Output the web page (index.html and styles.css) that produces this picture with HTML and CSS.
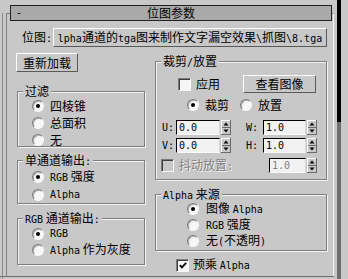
FILE: index.html
```html
<!DOCTYPE html>
<html>
<head>
<meta charset="utf-8">
<link rel="stylesheet" href="styles.css">
</head>
<body>
<div class="screen">
  <div class="main">
    <div class="outer">
      <div class="rollout">
        <div class="hdr"><span class="hdr-toggle e">-</span><span class="hdr-title">位图参数</span><span></span></div>
        <div class="content">
          <div class="row-path">
            <span class="path-label">位图<span class="e">:</span></span>
            <div class="btn path-btn"><span class="path-text"><span class="e">lpha</span>通道的<span class="e">tga</span>图来制作文字漏空效果<span class="e">\</span>抓图<span class="e">\8.tga</span></span></div>
          </div>
          <div class="cols">
            <div class="col">
              <div class="btn reload">重新加载</div>
              <div class="group gl g-filter">
                <div class="legend">过滤</div>
                <div class="opt"><span class="radio on"></span><span>四棱锥</span></div>
                <div class="opt"><span class="radio"></span><span>总面积</span></div>
                <div class="opt"><span class="radio"></span><span>无</span></div>
              </div>
              <div class="group gl g-single">
                <div class="legend">单通道输出<span class="e">:</span></div>
                <div class="opt"><span class="radio on"></span><span><span class="e">RGB</span> 强度</span></div>
                <div class="opt"><span class="radio"></span><span class="e">Alpha</span></div>
              </div>
              <div class="group gl g-rgb">
                <div class="legend"><span class="e">RGB</span> 通道输出<span class="e">:</span></div>
                <div class="opt"><span class="radio on"></span><span class="e">RGB</span></div>
                <div class="opt"><span class="radio"></span><span><span class="e">Alpha</span> 作为灰度</span></div>
              </div>
            </div>
            <div class="col">
              <div class="group g-crop">
                <div class="legend">裁剪<span class="e">/</span>放置</div>
                <div class="row-a">
                  <span class="chk ml22"></span><span class="ml5">应用</span>
                  <div class="btn view">查看图像</div>
                </div>
                <div class="row-b">
                  <span class="radio on ml31"></span><span class="ml6">裁剪</span>
                  <span class="radio ml11"></span><span class="ml6">放置</span>
                </div>
                <div class="spin-row mt7">
                  <span class="e lbl-u">U:</span>
                  <span class="field fw44"><span class="e">0.0</span></span>
                  <span class="arrows"><svg width="10" height="15" viewBox="0 0 10 15"><rect x="0" y="0" width="10" height="15" fill="#c8c8c8"/><path d="M0 0.5H9.5M0.5 0V15" stroke="#fff"/><path d="M0 14.5H10M9.5 0V15M1 7.5H9" stroke="#6a6a6a"/><path d="M5 2.5L7.5 5.5H2.5Z M2.5 9.5H7.5L5 12.5Z" fill="#000"/></svg></span>
                  <span class="e lbl-w">W:</span>
                  <span class="field fw43"><span class="e">1.0</span></span>
                  <span class="arrows"><svg width="10" height="15" viewBox="0 0 10 15"><rect x="0" y="0" width="10" height="15" fill="#c8c8c8"/><path d="M0 0.5H9.5M0.5 0V15" stroke="#fff"/><path d="M0 14.5H10M9.5 0V15M1 7.5H9" stroke="#6a6a6a"/><path d="M5 2.5L7.5 5.5H2.5Z M2.5 9.5H7.5L5 12.5Z" fill="#000"/></svg></span>
                </div>
                <div class="spin-row mt3">
                  <span class="e lbl-u">V:</span>
                  <span class="field fw44"><span class="e">0.0</span></span>
                  <span class="arrows"><svg width="10" height="15" viewBox="0 0 10 15"><rect x="0" y="0" width="10" height="15" fill="#c8c8c8"/><path d="M0 0.5H9.5M0.5 0V15" stroke="#fff"/><path d="M0 14.5H10M9.5 0V15M1 7.5H9" stroke="#6a6a6a"/><path d="M5 2.5L7.5 5.5H2.5Z M2.5 9.5H7.5L5 12.5Z" fill="#000"/></svg></span>
                  <span class="e lbl-w">H:</span>
                  <span class="field fw43"><span class="e">1.0</span></span>
                  <span class="arrows"><svg width="10" height="15" viewBox="0 0 10 15"><rect x="0" y="0" width="10" height="15" fill="#c8c8c8"/><path d="M0 0.5H9.5M0.5 0V15" stroke="#fff"/><path d="M0 14.5H10M9.5 0V15M1 7.5H9" stroke="#6a6a6a"/><path d="M5 2.5L7.5 5.5H2.5Z M2.5 9.5H7.5L5 12.5Z" fill="#000"/></svg></span>
                </div>
                <div class="spin-row mt5">
                  <span class="chk off ml5"></span><span class="ml5 dis">抖动放置<span class="e">:</span></span>
                  <span class="field fw37 dis-field"><span class="e">1.0</span></span>
                  <span class="arrows ml3"><svg width="10" height="15" viewBox="0 0 10 15"><rect x="0" y="0" width="10" height="15" fill="#c8c8c8"/><path d="M0 0.5H9.5M0.5 0V15" stroke="#fff"/><path d="M0 14.5H10M9.5 0V15M1 7.5H9" stroke="#6a6a6a"/><path d="M5 2.5L7.5 5.5H2.5Z M2.5 9.5H7.5L5 12.5Z" fill="#000"/></svg></span>
                </div>
              </div>
              <div class="group g-alpha">
                <div class="legend"><span class="e">Alpha</span> 来源</div>
                <div class="opt2"><span class="radio on"></span><span>图像 <span class="e">Alpha</span></span></div>
                <div class="opt2"><span class="radio"></span><span><span class="e">RGB</span> 强度</span></div>
                <div class="opt2"><span class="radio"></span><span>无<span class="e">(</span>不透明<span class="e">)</span></span></div>
              </div>
              <div class="premul">
                <span class="chk"><svg width="11" height="11" viewBox="0 0 11 11"><path d="M2 5L4.3 7.5L9 2.5" fill="none" stroke="#000" stroke-width="2"/></svg></span>
                <span class="ml4">预乘 <span class="e">Alpha</span></span>
              </div>
            </div>
          </div>
        </div>
      </div>
    </div>
  </div>
  <div class="gap"></div>
  <div class="sb"></div>
</div>
</body>
</html>
```
FILE: styles.css
```css
* { box-sizing: border-box; }
html, body { margin: 0; padding: 0; }
body {
  width: 348px;
  height: 279px;
  overflow: hidden;
  background: #c8c8c8;
  font-family: "Noto Sans CJK SC", sans-serif;
  font-size: 12px;
  line-height: 14px;
  color: #000;
}
.e { font-family: "DejaVu Sans Mono", monospace; font-size: 10px; }
.screen { display: flex; height: 279px; }
.main {
  width: 334px;
  height: 277px;
  padding-left: 2px;
  border-bottom: 1px solid #6e6e6e;
}
.outer { height: 100%; border-left: 1px solid #8a8a8a; padding-left: 3px; }
.rollout {
  margin-top: 13px;
  height: 263px;
  border-top: 1px solid #808080;
  border-left: 1px solid #808080;
  border-right: 1px solid #f4f4f4;
}
.gap { width: 3px; }
.sb { width: 4px; height: 279px; background: linear-gradient(#000 0, #000 122px, #6e6e6e 122px); }

.hdr {
  margin: -9px 1px 0 3px;
  height: 16px;
  background: #a9a9a9;
  border: 1px solid #202020;
  display: grid;
  grid-template-columns: 1fr auto 1fr;
  align-items: center;
}
.hdr-toggle { padding-left: 5px; }

.content { padding: 7px 6px 0 9px; }
.row-path { display: flex; align-items: center; height: 19px; }
.path-label { margin-left: 6px; }
.btn {
  background: #c8c8c8;
  border: 1px solid;
  border-color: #fff #5a5a5a #5a5a5a #fff;
  display: flex;
  align-items: center;
  justify-content: center;
  white-space: nowrap;
}
.path-btn { margin-left: auto; width: 274px; height: 19px; overflow: hidden; }
.cols {
  display: grid;
  grid-template-columns: 129px 172px;
  column-gap: 10px;
  margin-top: 6px;
}
.col { display: flex; flex-direction: column; }
.reload { width: 62px; height: 19px; }

.group {
  border: 1px solid #808080;
  box-shadow: 1px 1px 0 #f2f2f2, inset 1px 1px 0 #f2f2f2;
}
.legend {
  margin: -7px 0 0 5px;
  padding: 0 2px;
  background: #c8c8c8;
  width: fit-content;
  height: 12px;
  line-height: 12px;
  white-space: nowrap;
}
.gl { margin-left: 1px; width: 128px; }
.g-filter { margin-top: 19px; height: 56px; }
.g-filter .opt { height: 17px; }
.g-single { margin-top: 13px; height: 44px; }
.g-single .legend { margin-bottom: 2px; }
.g-single .opt { height: 18px; }
.g-rgb { margin-top: 14px; height: 47px; }
.g-rgb .legend { margin-bottom: 2px; }
.g-rgb .opt { height: 16px; }
.opt { display: flex; align-items: center; padding-left: 14px; gap: 6px; white-space: nowrap; }

.radio {
  flex: none;
  width: 12px;
  height: 12px;
  border-radius: 50%;
  background: #f6f6f6;
  border: 1px solid;
  border-color: #7a7a7a #fafafa #fafafa #7a7a7a;
  box-shadow: inset 1px 1px 0 #b0b0b0;
  display: flex;
  align-items: center;
  justify-content: center;
}
.radio.on::after {
  content: "";
  width: 4px;
  height: 4px;
  border-radius: 50%;
  background: #000;
}
.chk {
  flex: none;
  width: 13px;
  height: 13px;
  background: #f6f6f6;
  border: 1px solid;
  border-color: #7a7a7a #fafafa #fafafa #7a7a7a;
  box-shadow: inset 1px 1px 0 #404040;
  display: flex;
  align-items: center;
  justify-content: center;
}
.chk.off { background: #c8c8c8; }
.chk svg { display: block; margin: 1px 0 0 1px; }

.g-crop { margin-top: 8px; height: 119px; padding-right: 9px; }
.g-crop .legend { margin-bottom: 8px; }
.row-a { display: flex; align-items: center; height: 18px; }
.view { margin-left: auto; margin-right: 1px; width: 73px; height: 18px; }
.row-b { display: flex; align-items: center; height: 16px; margin-top: 4px; }
.spin-row { display: flex; align-items: center; height: 15px; }
.mt7 { margin-top: 7px; }
.mt3 { margin-top: 3px; }
.mt5 { margin-top: 5px; }
.ml3 { margin-left: 3px; }
.ml4 { margin-left: 4px; }
.ml5 { margin-left: 5px; }
.ml6 { margin-left: 6px; }
.ml11 { margin-left: 11px; }
.ml22 { margin-left: 22px; }
.ml31 { margin-left: 31px; }
.lbl-u { margin-left: 6px; width: 14px; }
.lbl-w { margin-left: 15px; width: 17px; }
.field {
  height: 15px;
  background: #f2f2f2;
  border: 1px solid;
  border-color: #000 #d8d8d8 #fafafa #000;
  padding-left: 2px;
  display: flex;
  align-items: center;
}
.fw44 { width: 44px; }
.fw43 { width: 43px; }
.fw37 { width: 37px; margin-left: auto; }
.arrows { margin-left: 1px; width: 10px; height: 15px; }
.arrows svg { display: block; }
.dis { color: #808080; text-shadow: 1px 1px 0 #f4f4f4; white-space: nowrap; }
.dis-field { color: #808080; }

.g-alpha { margin-top: 14px; height: 57px; }
.g-alpha .legend { margin-bottom: 1px; }
.opt2 { display: flex; align-items: center; height: 16px; padding-left: 31px; gap: 7px; white-space: nowrap; }
.premul { display: flex; align-items: center; height: 14px; margin-top: 7px; padding-left: 21px; }
```
